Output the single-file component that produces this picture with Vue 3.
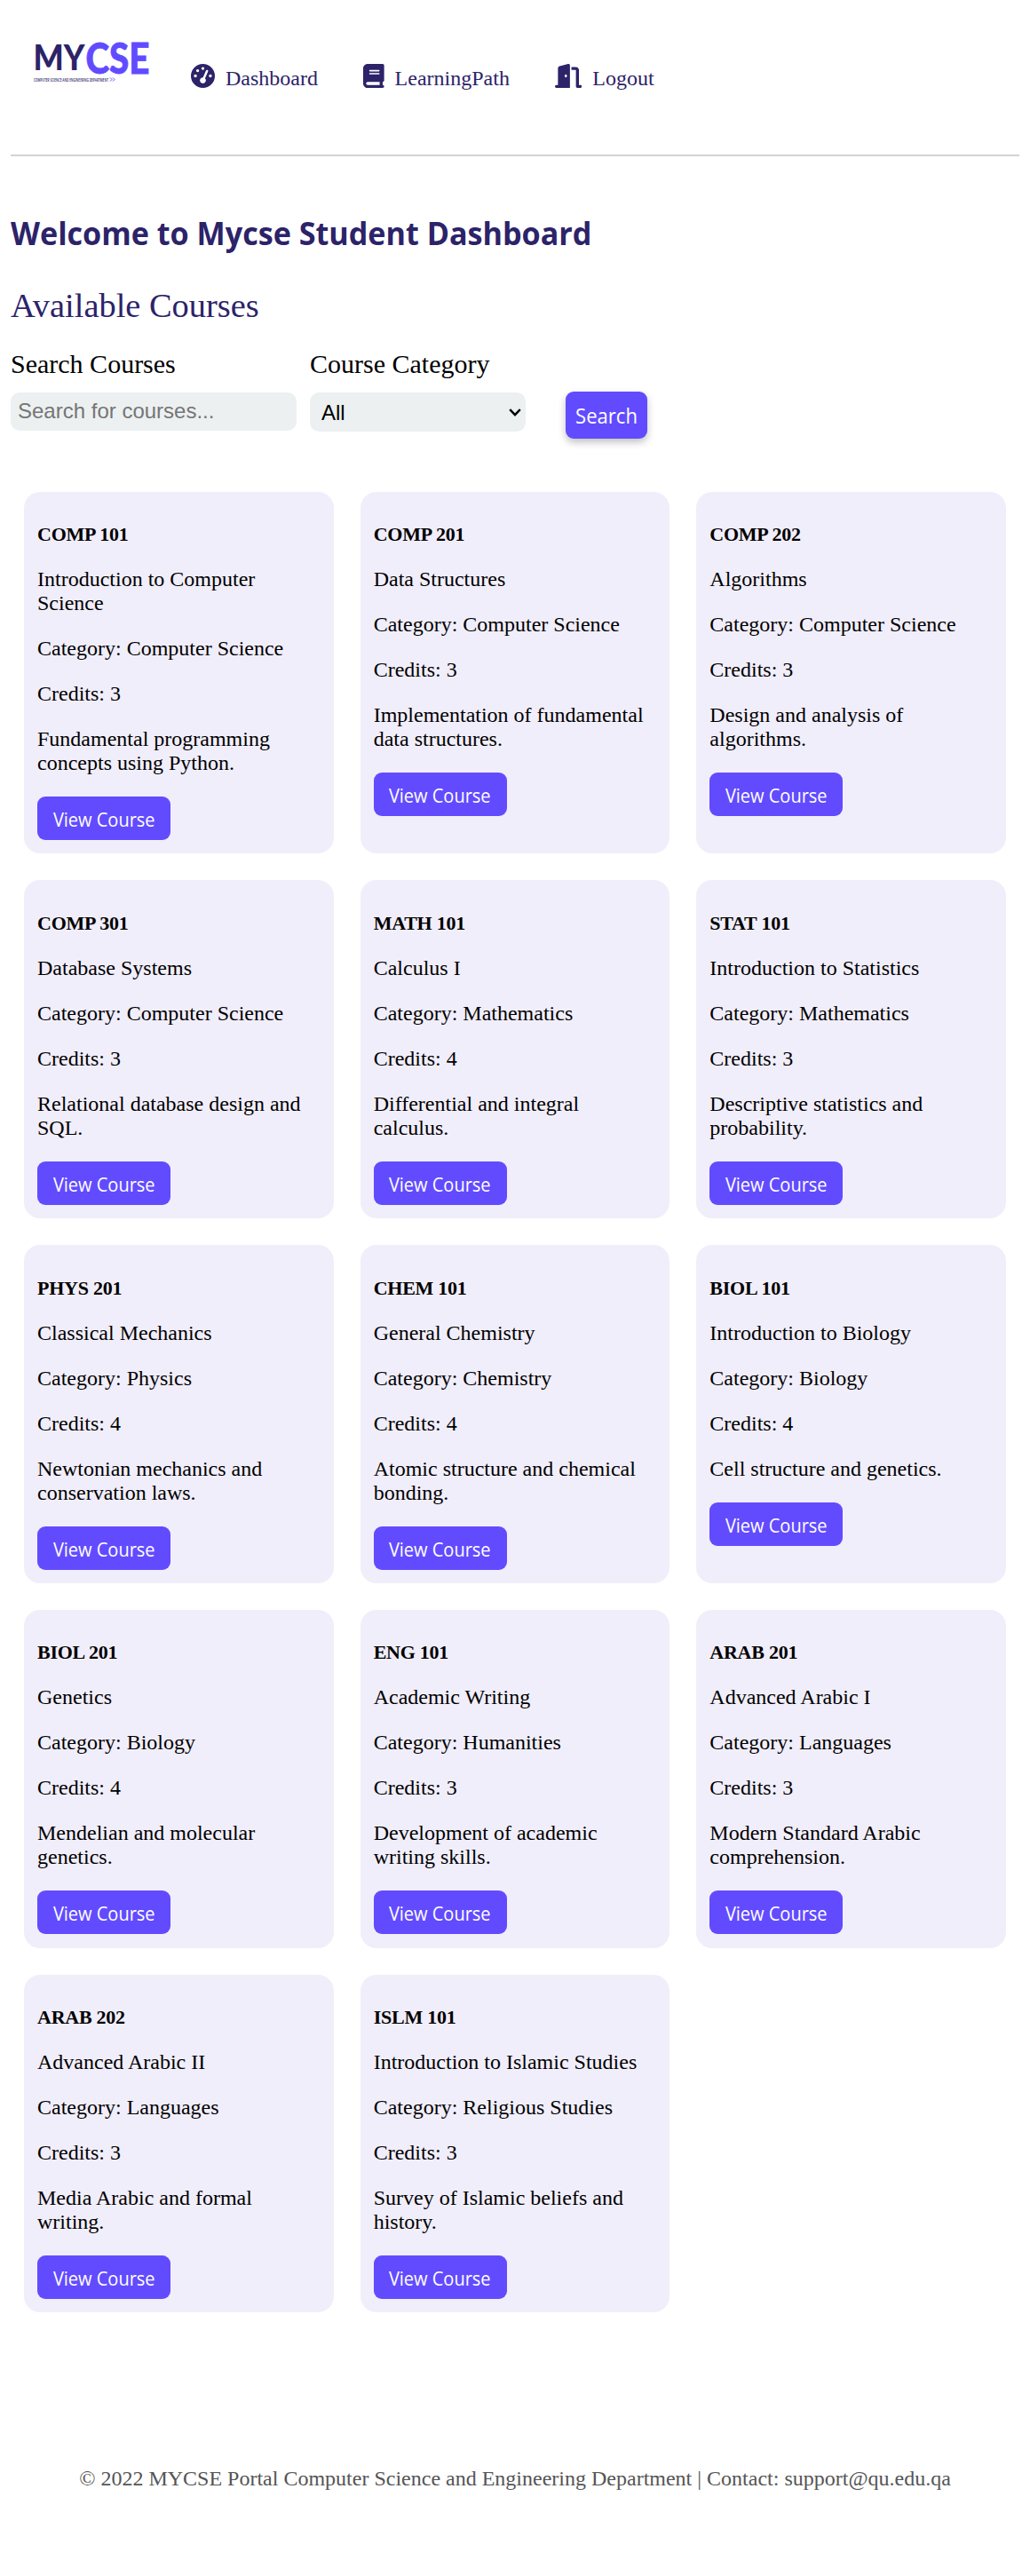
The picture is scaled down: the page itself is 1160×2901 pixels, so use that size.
<script setup>
import { ref } from 'vue'

const query = ref('')
const category = ref('All')

const links = [
  {
    label: 'Dashboard',
    width: 512,
    path: 'M0 256a256 256 0 1 1 512 0A256 256 0 1 1 0 256zM288 96a32 32 0 1 0 -64 0 32 32 0 1 0 64 0zM256 416c35.3 0 64-28.7 64-64c0-17.4-6.9-33.1-18.1-44.6L366 161.7c5.3-12.1-.2-26.3-12.3-31.6s-26.3 .2-31.6 12.3L257.9 288c-.6 0-1.3 0-1.9 0c-35.3 0-64 28.7-64 64s28.7 64 64 64zM176 144a32 32 0 1 0 -64 0 32 32 0 1 0 64 0zM96 288a32 32 0 1 0 0-64 32 32 0 1 0 0 64zm352-32a32 32 0 1 0 -64 0 32 32 0 1 0 64 0z'
  },
  {
    label: 'LearningPath',
    width: 448,
    path: 'M96 0C43 0 0 43 0 96V416c0 53 43 96 96 96H384h32c17.7 0 32-14.3 32-32s-14.3-32-32-32V384c17.7 0 32-14.3 32-32V32c0-17.7-14.3-32-32-32H384 96zm0 384H352v64H96c-17.7 0-32-14.3-32-32s14.3-32 32-32zm32-240c0-8.8 7.2-16 16-16H336c8.8 0 16 7.2 16 16s-7.2 16-16 16H144c-8.8 0-16-7.2-16-16zm16 48H336c8.8 0 16 7.2 16 16s-7.2 16-16 16H144c-8.8 0-16-7.2-16-16s7.2-16 16-16z'
  },
  {
    label: 'Logout',
    width: 576,
    path: 'M320 32c0-9.9-4.5-19.2-12.3-25.2S289.8-1.4 280.2 1l-179.9 45C79 51.3 64 70.5 64 92.5V448H32c-17.7 0-32 14.3-32 32s14.3 32 32 32H96 288h32V480 32zM256 256c0 17.7-10.7 32-24 32s-24-14.3-24-32s10.7-32 24-32s24 14.3 24 32zm96-128h96V480c0 17.7 14.3 32 32 32h64c17.7 0 32-14.3 32-32s-14.3-32-32-32H512V128c0-35.3-28.7-64-64-64H352v64z'
  }
]

const courses = [
  ['COMP 101', 'Introduction to Computer Science', 'Computer Science', 3, 'Fundamental programming concepts using Python.'],
  ['COMP 201', 'Data Structures', 'Computer Science', 3, 'Implementation of fundamental data structures.'],
  ['COMP 202', 'Algorithms', 'Computer Science', 3, 'Design and analysis of algorithms.'],
  ['COMP 301', 'Database Systems', 'Computer Science', 3, 'Relational database design and SQL.'],
  ['MATH 101', 'Calculus I', 'Mathematics', 4, 'Differential and integral calculus.'],
  ['STAT 101', 'Introduction to Statistics', 'Mathematics', 3, 'Descriptive statistics and probability.'],
  ['PHYS 201', 'Classical Mechanics', 'Physics', 4, 'Newtonian mechanics and conservation laws.'],
  ['CHEM 101', 'General Chemistry', 'Chemistry', 4, 'Atomic structure and chemical bonding.'],
  ['BIOL 101', 'Introduction to Biology', 'Biology', 4, 'Cell structure and genetics.'],
  ['BIOL 201', 'Genetics', 'Biology', 4, 'Mendelian and molecular genetics.'],
  ['ENG 101', 'Academic Writing', 'Humanities', 3, 'Development of academic writing skills.'],
  ['ARAB 201', 'Advanced Arabic I', 'Languages', 3, 'Modern Standard Arabic comprehension.'],
  ['ARAB 202', 'Advanced Arabic II', 'Languages', 3, 'Media Arabic and formal writing.'],
  ['ISLM 101', 'Introduction to Islamic Studies', 'Religious Studies', 3, 'Survey of Islamic beliefs and history.']
].map(([code, name, category, credits, description]) => ({ code, name, category, credits, description }))

const categories = ['All', ...new Set(courses.map((c) => c.category))]
</script>

<template>
  <div class="page">
    <header class="header">
      <svg class="logo" viewBox="0 0 140 54" role="img" aria-label="MYCSE">
        <text class="logo-my" x="0.5" y="37" textLength="58" lengthAdjust="spacingAndGlyphs">MY</text>
        <text class="logo-cse" x="59.5" y="40.5" textLength="72" lengthAdjust="spacingAndGlyphs">CSE</text>
        <text class="logo-tag" x="1" y="49.6" textLength="84" lengthAdjust="spacingAndGlyphs">COMPUTER SCIENCE AND ENGINEERING DEPARTMENT</text>
        <path class="logo-mark" d="M87 45.5l2 2-2 2M90 45.5l2 2-2 2" />
      </svg>
      <nav class="nav">
        <a v-for="link in links" :key="link.label" class="nav-link">
          <svg class="nav-icon" :viewBox="`0 0 ${link.width} 512`"><path :d="link.path" /></svg>
          <span>{{ link.label }}</span>
        </a>
      </nav>
    </header>

    <main>
      <h1 class="welcome"><span>Welcome to Mycse Student Dashboard</span></h1>
      <h2 class="subtitle">Available Courses</h2>

      <form class="filters" @submit.prevent>
        <label class="field search-field">
          <span class="label">Search Courses</span>
          <input v-model="query" class="control" type="text" placeholder="Search for courses..." />
        </label>
        <label class="field category-field">
          <span class="label">Course Category</span>
          <span class="select-wrap">
            <select v-model="category" class="control select">
              <option v-for="c in categories" :key="c">{{ c }}</option>
            </select>
            <svg class="chevron" viewBox="0 0 14 9"><path d="M1.2 1.2L7 7.2l5.8-6" /></svg>
          </span>
        </label>
        <button class="search-button" type="submit"><span>Search</span></button>
      </form>

      <section class="courses">
        <article v-for="course in courses" :key="course.code" class="card">
          <h5 class="code">{{ course.code }}</h5>
          <p>{{ course.name }}</p>
          <p>Category: {{ course.category }}</p>
          <p>Credits: {{ course.credits }}</p>
          <p>{{ course.description }}</p>
          <button class="view-button" type="button"><span>View Course</span></button>
        </article>
      </section>
    </main>

    <footer class="footer">© 2022 MYCSE Portal Computer Science and Engineering Department | Contact: support@qu.edu.qa</footer>
  </div>
</template>

<style>
body {
  background: #fff;
}
</style>

<style scoped>
.page {
  box-sizing: border-box;
  min-height: 2901px;
  padding: 0 12px;
  font-family: "Liberation Serif", "Times New Roman", serif;
  font-size: 24px;
  line-height: 27px;
  color: #000;
}

.header {
  display: flex;
  align-items: flex-start;
  box-sizing: border-box;
  height: 176px;
  padding: 42px 0 0 25px;
  border-bottom: 2px solid #d3d3d3;
}

.logo {
  flex: none;
  width: 140px;
  height: 54px;
  overflow: visible;
}

.logo text {
  font-family: Lato, sans-serif;
  font-weight: 900;
}

.logo .logo-my {
  font-size: 39px;
  fill: #2c2369;
}

.logo .logo-cse {
  font-size: 47px;
  fill: #624bff;
  stroke: #624bff;
  stroke-width: 0.8;
}

.logo .logo-tag {
  font-family: "Open Sans", sans-serif;
  font-size: 6px;
  font-weight: 600;
  fill: #2c2369;
}

.logo-mark {
  fill: none;
  stroke: #624bff;
  stroke-width: 1;
}

.nav {
  display: flex;
  gap: 51px;
  padding: 30px 0 0 38px;
}

.nav-link {
  display: flex;
  gap: 12px;
  color: #2c2369;
}

.nav-link span {
  margin-top: 3px;
}

.nav-icon {
  height: 27px;
  fill: #2c2369;
}

.welcome {
  margin: 60px 0 0;
  font-family: "Open Sans", "Noto Sans", sans-serif;
  font-size: 36px;
  line-height: 54px;
  font-weight: 700;
  color: #2c2369;
  white-space: nowrap;
}

.welcome span {
  display: inline-block;
  transform: scaleX(0.948);
  transform-origin: left;
}

.subtitle {
  margin: 31px 0 0;
  font-size: 38.4px;
  line-height: 46px;
  font-weight: 400;
  color: #2c2369;
}

.filters {
  display: flex;
  align-items: flex-start;
  height: 187px;
}

.field {
  display: flex;
  flex-direction: column;
}

.search-field {
  width: 322px;
}

.category-field {
  width: 243px;
  margin-left: 15px;
}

.label {
  margin: 26px 0 15px;
  font-size: 30px;
  line-height: 34px;
}

.control {
  box-sizing: border-box;
  width: 100%;
  height: 43px;
  padding: 0 8px 2px;
  border: 0;
  border-radius: 10px;
  background: #ecf0f1;
  font-family: "Liberation Sans", Arial, sans-serif;
  font-size: 24px;
  color: #000;
}

.control::placeholder {
  color: #757575;
}

.select-wrap {
  display: grid;
  align-items: center;
}

.select-wrap > * {
  grid-area: 1 / 1;
}

.select {
  height: 44px;
  padding: 0 13px;
  appearance: none;
}

.chevron {
  justify-self: end;
  width: 14px;
  height: 9px;
  margin-right: 5px;
  fill: none;
  stroke: #000;
  stroke-width: 2.4;
}

.search-button {
  display: flex;
  justify-content: center;
  align-items: center;
  width: 92px;
  height: 53px;
  margin: 74px 0 0 45px;
  padding: 0;
  border: 0;
  border-radius: 9px;
  background: #624bff;
  box-shadow: 0 4px 8px rgba(0, 0, 0, 0.25);
  font-family: "Open Sans", "Noto Sans", sans-serif;
  font-size: 24px;
  color: #fff;
}

.search-button span {
  transform: scaleX(0.92);
}

.courses {
  display: grid;
  grid-template-columns: repeat(3, 1fr);
  gap: 30px;
  padding: 0 15px;
}

.card {
  box-sizing: border-box;
  min-height: 380.75px;
  padding: 34.45px 15px 14.95px;
  border-radius: 18px;
  background: #f1eefb;
}

.code {
  margin: 0 0 24px;
  font-size: 22px;
  line-height: 27px;
  font-weight: 700;
  letter-spacing: -0.25px;
}

.card p {
  margin: 0 0 24px;
}

.view-button {
  display: flex;
  justify-content: center;
  align-items: center;
  width: 150px;
  height: 49px;
  padding: 3px 0 0;
  border: 0;
  border-radius: 9px;
  background: #624bff;
  font-family: "Open Sans", "Noto Sans", sans-serif;
  font-size: 21px;
  color: #fff;
}

.view-button span {
  transform: scaleX(0.952);
}

.footer {
  margin-top: 174px;
  text-align: center;
  color: #555;
}
</style>
